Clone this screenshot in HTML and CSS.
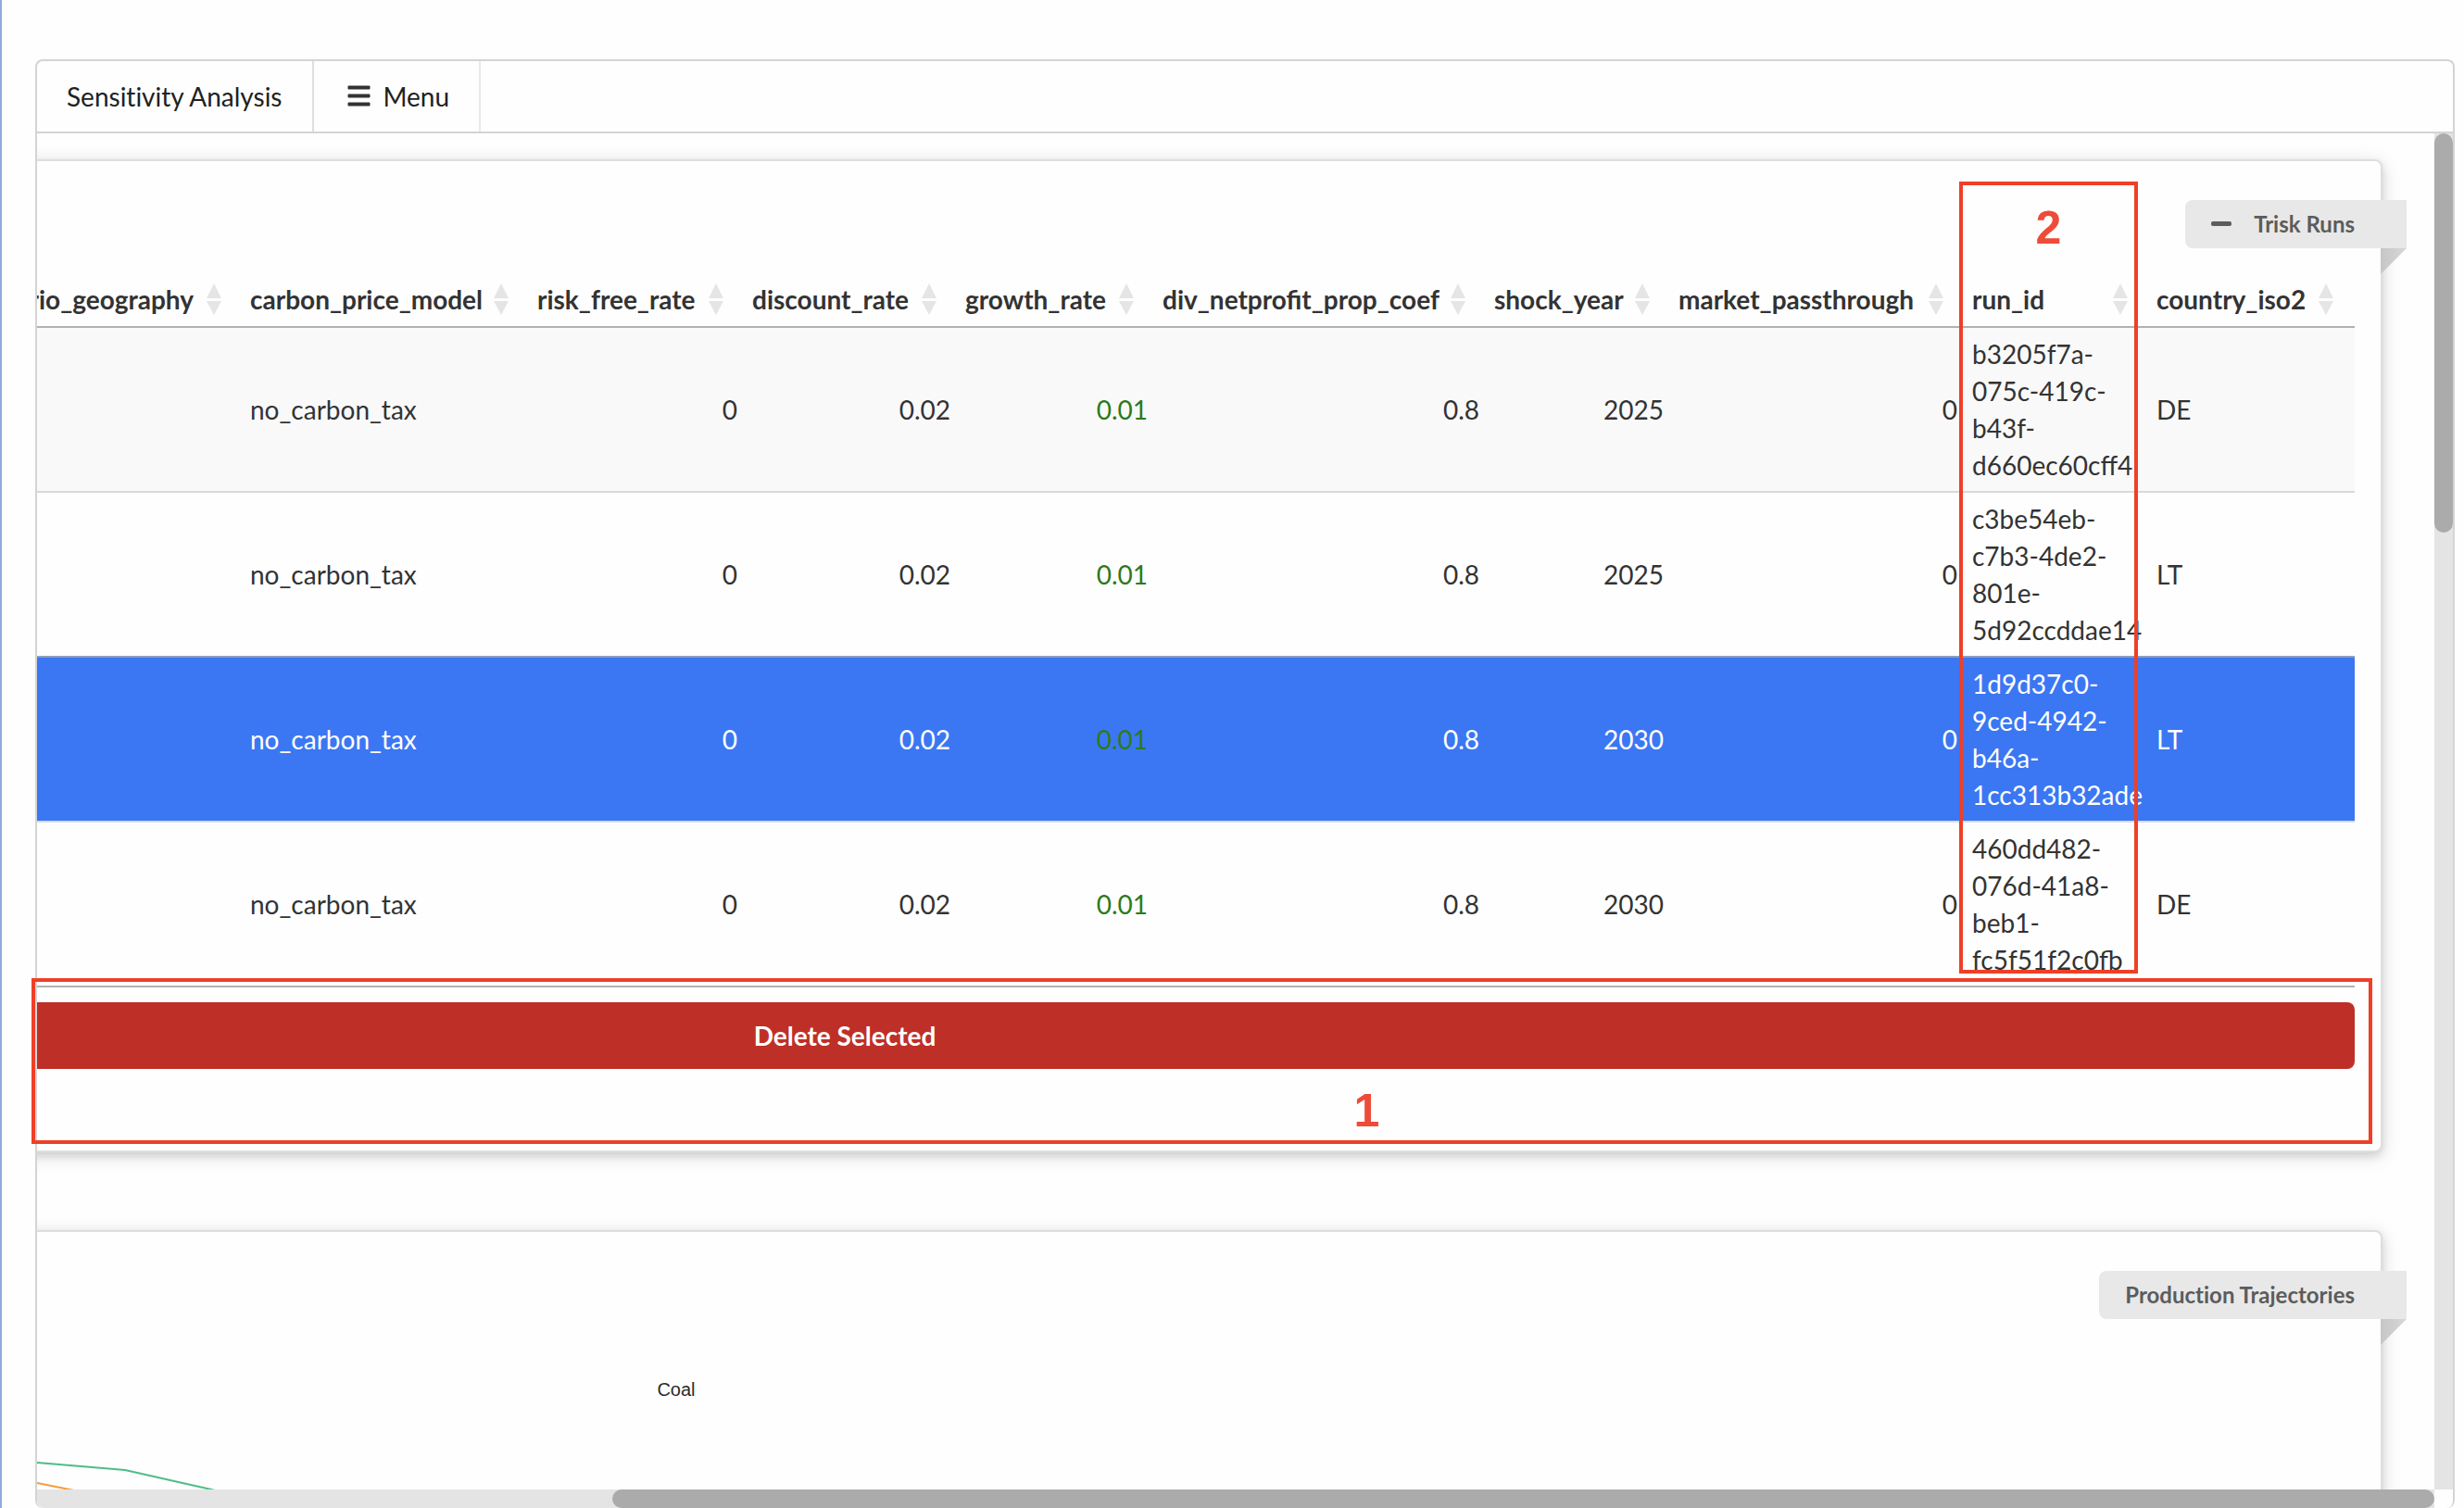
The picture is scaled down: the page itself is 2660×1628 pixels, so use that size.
FILE: index.html
```html
<!DOCTYPE html>
<html lang="en">
<head>
<meta charset="utf-8">
<title>Sensitivity Analysis</title>
<link rel="stylesheet" href="styles.css">
</head>
<body>
<svg class="defs" aria-hidden="true">
  <symbol id="sort" viewBox="0 0 16 34"><path d="M8 0l8 16H0zM0 19h16L8 34z" fill="#e5e5e5"/></symbol>
</svg>
<main class="panel">
  <nav class="bar">
    <span class="bar-item">Sensitivity Analysis</span>
    <button class="bar-item bar-menu" type="button">
      <svg width="25" height="24" viewBox="0 0 25 24" aria-hidden="true"><path d="M1 1h23v3H1zM1 10h23v3H1zM1 19h23v3H1z" fill="#333" stroke="#333" stroke-linejoin="round"/></svg>
      Menu
    </button>
  </nav>
  <div class="frame">
    <div class="viewport">
      <section class="card">
        <header class="ribbon">
          <button class="collapse" type="button" aria-label="Collapse Trisk Runs"><svg width="22" height="6" viewBox="0 0 22 6" aria-hidden="true"><rect width="22" height="5" rx="2" fill="#5c5c5c"/></svg></button>
          <h2>Trisk Runs</h2>
        </header>
        <table class="runs">
          <colgroup><col><col class="w-model"><col class="w-risk"><col class="w-disc"><col class="w-grow"><col class="w-div"><col class="w-shock"><col class="w-market"><col class="w-run"><col class="w-iso"></colgroup>
          <thead>
            <tr>
              <th><button type="button" class="first">scenario_geography <svg><use href="#sort"/></svg></button></th>
              <th><button type="button">carbon_price_model <svg><use href="#sort"/></svg></button></th>
              <th><button type="button">risk_free_rate <svg><use href="#sort"/></svg></button></th>
              <th><button type="button">discount_rate <svg><use href="#sort"/></svg></button></th>
              <th><button type="button">growth_rate <svg><use href="#sort"/></svg></button></th>
              <th><button type="button">div_netprofit_prop_coef <svg><use href="#sort"/></svg></button></th>
              <th><button type="button">shock_year <svg><use href="#sort"/></svg></button></th>
              <th><button type="button">market_passthrough <svg><use href="#sort"/></svg></button></th>
              <th><button type="button">run_id <svg><use href="#sort"/></svg></button></th>
              <th><button type="button">country_iso2 <svg><use href="#sort"/></svg></button></th>
            </tr>
          </thead>
          <tbody>
            <tr class="odd"><td></td><td>no_carbon_tax</td><td class="num">0</td><td class="num">0.02</td><td class="num good">0.01</td><td class="num">0.8</td><td class="num">2025</td><td class="num">0</td><td>b3205f7a-075c-419c-b43f-d660ec60cff4</td><td>DE</td></tr>
            <tr><td></td><td>no_carbon_tax</td><td class="num">0</td><td class="num">0.02</td><td class="num good">0.01</td><td class="num">0.8</td><td class="num">2025</td><td class="num">0</td><td>c3be54eb-c7b3-4de2-801e-5d92ccddae14</td><td>LT</td></tr>
            <tr class="selected"><td></td><td>no_carbon_tax</td><td class="num">0</td><td class="num">0.02</td><td class="num good">0.01</td><td class="num">0.8</td><td class="num">2030</td><td class="num">0</td><td>1d9d37c0-9ced-4942-b46a-1cc313b32ade</td><td>LT</td></tr>
            <tr><td></td><td>no_carbon_tax</td><td class="num">0</td><td class="num">0.02</td><td class="num good">0.01</td><td class="num">0.8</td><td class="num">2030</td><td class="num">0</td><td>460dd482-076d-41a8-beb1-fc5f51f2c0fb</td><td>DE</td></tr>
          </tbody>
        </table>
        <button class="delete" type="button">Delete Selected</button>
      </section>
      <section class="card">
        <header class="ribbon"><h2>Production Trajectories</h2></header>
        <figure class="chart">
          <figcaption>Coal</figcaption>
          <svg class="plot" width="2896" height="400" viewBox="0 0 2896 400" role="img" aria-label="Coal production trajectories">
            <path d="M600 27L758 39L853 47L946 68L1060 96" fill="none" stroke="#4dbd85" stroke-width="2"/>
            <path d="M700 49L758 61L798 69L860 82" fill="none" stroke="#f59b3f" stroke-width="2"/>
          </svg>
        </figure>
      </section>
    </div>
    <div class="track-y" aria-hidden="true"><div class="thumb-y"></div></div>
    <div class="track-x" aria-hidden="true"><div class="thumb-x"></div></div>
  </div>
</main>
<div class="note note-delete"><span>1</span></div>
<div class="note note-run"><span>2</span></div>
</body>
</html>
```
FILE: styles.css
```css
* { box-sizing: border-box; }

body {
  margin: 0;
  height: 100vh;
  padding: 64px 10px 0 36px;
  border-left: 2px solid #8eaadb;
  background: #fefefe;
  color: #333;
  font: 28px/40px Lato, "Liberation Sans", sans-serif;
  position: relative;
  overflow: hidden;
}

button {
  margin: 0;
  padding: 0;
  border: 0;
  background: none;
  color: inherit;
  font: inherit;
  cursor: pointer;
}

.defs { position: absolute; width: 0; height: 0; }

.panel {
  display: flex;
  flex-direction: column;
  height: 100%;
  border: 2px solid #d4d4d5;
  border-bottom: 0;
  border-radius: 8px;
  overflow: hidden;
}

.bar {
  display: flex;
  flex: none;
  height: 78px;
  border-bottom: 2px solid #d4d4d5;
  color: #212121;
  font-variant-ligatures: none;
}

.bar-item {
  display: flex;
  align-items: center;
  padding: 0 32px;
  border-right: 2px solid #dedede;
}

.bar-menu {
  gap: 14px;
  padding: 0 32px 0 36px;
  border-right-color: #e9e9e9;
}

.frame {
  flex: 1;
  min-height: 0;
  display: grid;
  grid-template: minmax(0, 1fr) 20px / minmax(0, 1fr) 20px;
}

/* The content is wider than the window and is shown at its right end. */
.viewport {
  display: flex;
  flex-direction: column;
  align-items: flex-end;
  gap: 84px;
  padding: 28px 56px 0 0;
  overflow: hidden;
}

.card {
  flex: none;
  width: calc(100% + 788px);
  padding: 42px 28px 88px;
  border: 2px solid #dededf;
  border-radius: 8px;
  background: #fefefe;
  box-shadow: 0 4px 8px rgba(34, 36, 38, .12), 0 4px 20px rgba(34, 36, 38, .15);
}

.ribbon {
  position: relative;
  display: flex;
  align-items: center;
  gap: 24px;
  width: fit-content;
  height: 52px;
  margin: 0 -56px 0 auto;
  padding: 0 56px 0 28px;
  border-radius: 8px 0 0 8px;
  background: #e8e8e8;
  color: #5c5c5c;
  font-variant-ligatures: none;
}

.ribbon::after {
  content: "";
  position: absolute;
  top: 100%;
  right: 0;
  width: 28px;
  height: 28px;
  background: linear-gradient(90deg, #c6c6c6, #d8d8d8);
  clip-path: polygon(0 0, 100% 0, 0 100%);
}

.ribbon h2 { margin: 0; font-size: 24px; line-height: 24px; }

.collapse { display: flex; }

.runs {
  width: 100%;
  margin-top: 26px;
  table-layout: fixed;
  border-collapse: separate;
  border-spacing: 0;
  border-bottom: 2px solid #b1b1b1;
}

.w-model { width: 310px; }
.w-risk { width: 232px; }
.w-disc { width: 230px; }
.w-grow { width: 213px; }
.w-div { width: 358px; }
.w-shock { width: 199px; }
.w-market { width: 317px; }
.w-run { width: 199px; }
.w-iso { width: 222px; }

.runs th {
  padding: 9px 23px 9px 8px;
  border-bottom: 2px solid #b1b1b1;
  text-align: left;
}

.runs th button {
  display: flex;
  justify-content: space-between;
  align-items: center;
  width: 100%;
  height: 40px;
  font-weight: 700;
  white-space: nowrap;
}

.runs th button.first { justify-content: flex-end; gap: 14px; }

.runs th svg { flex: none; width: 16px; height: 34px; }

.runs td {
  height: 178px;
  padding: 8px;
  border-top: 2px solid #dadada;
}

.runs .odd td { height: 176px; border-top: 0; background: #f9f9f9; }

.runs .selected td {
  border-top-color: #8f9fba;
  background: #3b77f3;
  color: #fff;
}

.runs .num { text-align: right; }

.runs .good, .runs .selected .good { color: #2c7a1c; }

.delete {
  display: block;
  width: 100%;
  height: 72px;
  margin-top: 16px;
  border-radius: 8px;
  background: #be3027;
  color: #fff;
  font-weight: 700;
}

.chart { width: 2896px; margin: 64px 0 0; }

.chart figcaption {
  color: #2a2a2a;
  font: 20px/24px "Liberation Sans", sans-serif;
  text-align: center;
}

.plot { display: block; margin-top: 28px; }

.track-y, .track-x { background: #e4e4e4; }

.track-x { border-radius: 0 0 0 8px; }

.thumb-y, .thumb-x { border-radius: 10px; background: #ababab; }

.thumb-y { height: 431px; }

.thumb-x { height: 100%; width: 76%; margin-left: auto; }

/* Numbered call-outs drawn over the page */
.note {
  position: absolute;
  display: flex;
  justify-content: center;
  border: 4px solid #ee4027;
  color: #ee4b38;
  font: 700 50px/56px "Liberation Sans", sans-serif;
}

.note-delete {
  top: 1056px;
  left: 32px;
  right: 99px;
  height: 179px;
  align-items: flex-end;
  padding: 0 0 4px 356px;
}

.note-run {
  top: 196px;
  right: 352px;
  width: 193px;
  height: 855px;
  padding-top: 18px;
}
```
